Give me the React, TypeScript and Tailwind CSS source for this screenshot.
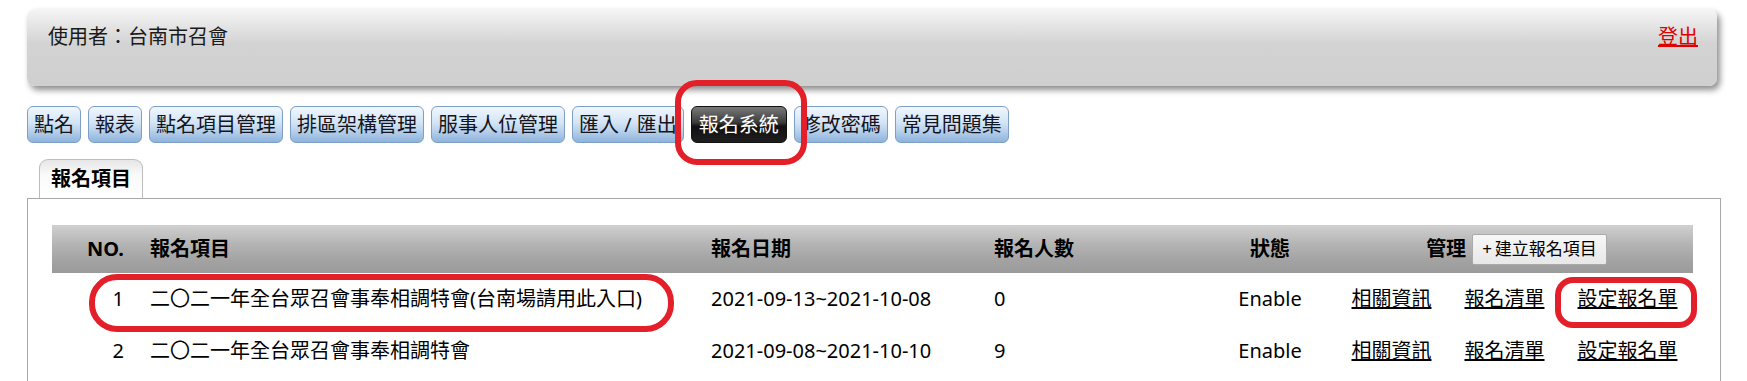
import React from "react";

const navItems = [
  "點名",
  "報表",
  "點名項目管理",
  "排區架構管理",
  "服事人位管理",
  "匯入 / 匯出",
  "報名系統",
  "修改密碼",
  "常見問題集",
];

const rows = [
  {
    no: "1",
    name: "二〇二一年全台眾召會事奉相調特會(台南場請用此入口)",
    date: "2021-09-13~2021-10-08",
    count: "0",
    status: "Enable",
  },
  {
    no: "2",
    name: "二〇二一年全台眾召會事奉相調特會",
    date: "2021-09-08~2021-10-10",
    count: "9",
    status: "Enable",
  },
];

export default function App() {
  return (
    <div
      className="relative w-[1747px] h-[381px] overflow-hidden bg-white text-black"
      style={{ fontFamily: '"Noto Sans", "Noto Sans CJK TC", sans-serif' }}
    >
      {/* Header */}
      <div className="pt-[9px] pl-[27px] pr-[30px]">
        <div className="h-[77px] rounded-[8px] bg-[linear-gradient(to_bottom,#f5f5f5,#d3d3d3_45%,#cfcfcf)] shadow-[3px_4px_6px_rgba(0,0,0,0.45)] flex justify-between items-start pl-[21px] pr-[19px] pt-[14px]">
          <span className="text-[20px] leading-[28px] text-[#1a1a1a]">使用者：台南市召會</span>
          <a href="#" className="text-[20px] leading-[28px] text-[#e00000] underline">
            登出
          </a>
        </div>
      </div>

      {/* Nav buttons */}
      <div className="mt-[20px] pl-[27px] flex gap-[7px]">
        {navItems.map((item) =>
          item === "報名系統" ? (
            <button
              key={item}
              className="h-[37px] px-[7px] rounded-[6px] border border-[#111] bg-[linear-gradient(to_bottom,#7a7a7a,#3a3a3a_45%,#111_55%,#1e1e1e)] text-white text-[20px] leading-[28px] whitespace-nowrap"
            >
              {item}
            </button>
          ) : (
            <button
              key={item}
              className="h-[37px] px-[6px] rounded-[6px] border border-[#7d9fc6] bg-[linear-gradient(to_bottom,#f1f7fd,#d3e4f5_45%,#b5cfeb_70%,#8fb3dc)] text-[#141420] text-[20px] leading-[28px] whitespace-nowrap"
            >
              {item}
            </button>
          )
        )}
      </div>

      {/* Tab */}
      <div className="mt-[16px] pl-[39px] flex">
        <div className="h-[39px] w-[104px] rounded-t-[9px] border border-b-0 border-[#bdbdbd] bg-[linear-gradient(to_bottom,#e6e6e6,#fafafa_40%,#ffffff)] flex items-center justify-center">
          <span className="text-[20px] font-bold leading-[28px]">報名項目</span>
        </div>
      </div>

      {/* Content box */}
      <div className="ml-[27px] w-[1694px] h-[200px] border border-b-0 border-[#a8a8a8] pt-[26px] pl-[24px]">
        <div className="w-[1641px]">
          {/* Table header */}
          <div className="grid grid-cols-[88px_560px_283px_217px_140px_353px] h-[48px] items-center bg-[linear-gradient(to_bottom,#d0d0d0,#b4b4b4_40%,#a2a2a2_75%,#9b9b9b)] text-[20px] font-bold leading-[28px]">
            <div className="text-right pr-[16px]">NO.</div>
            <div className="pl-[10px]">報名項目</div>
            <div className="pl-[11px]">報名日期</div>
            <div className="pl-[11px]">報名人數</div>
            <div className="text-center">狀態</div>
            <div className="flex items-center justify-center">
              <span>管理</span>
              <button className="ml-[6px] h-[31px] px-[9px] rounded-[2px] border border-[#a9a9a9] bg-[linear-gradient(to_bottom,#f7f7f7,#e8e8e8)] text-[17px] font-normal leading-[24px] whitespace-nowrap flex items-center">
                <span className="mr-[3px]">+</span>
                <span>建立報名項目</span>
              </button>
            </div>
          </div>

          {/* Rows */}
          {rows.map((r) => (
            <div
              key={r.no}
              className="grid grid-cols-[88px_560px_283px_217px_140px_353px] h-[52px] items-center text-[20px] leading-[28px]"
            >
              <div className="text-right pr-[16px]">{r.no}</div>
              <div className="pl-[10px] whitespace-nowrap">{r.name}</div>
              <div className="pl-[11px] whitespace-nowrap">{r.date}</div>
              <div className="pl-[11px]">{r.count}</div>
              <div className="text-center">{r.status}</div>
              <div className="flex items-center justify-center gap-[33px] whitespace-nowrap pr-[4px]">
                <a href="#" className="underline">相關資訊</a>
                <a href="#" className="underline">報名清單</a>
                <a href="#" className="underline">設定報名單</a>
              </div>
            </div>
          ))}
        </div>
      </div>

      {/* Red annotation marks */}
      <div className="absolute left-[675px] top-[80px] w-[132px] h-[85px] rounded-[22px] border-[6px] border-[#e3202a] pointer-events-none" />
      <div className="absolute left-[89px] top-[274px] w-[585px] h-[58px] rounded-[28px] border-[6px] border-[#e3202a] pointer-events-none" />
      <div className="absolute left-[1555px] top-[277px] w-[142px] h-[51px] rounded-[18px] border-[6px] border-[#e3202a] pointer-events-none" />
    </div>
  );
}
